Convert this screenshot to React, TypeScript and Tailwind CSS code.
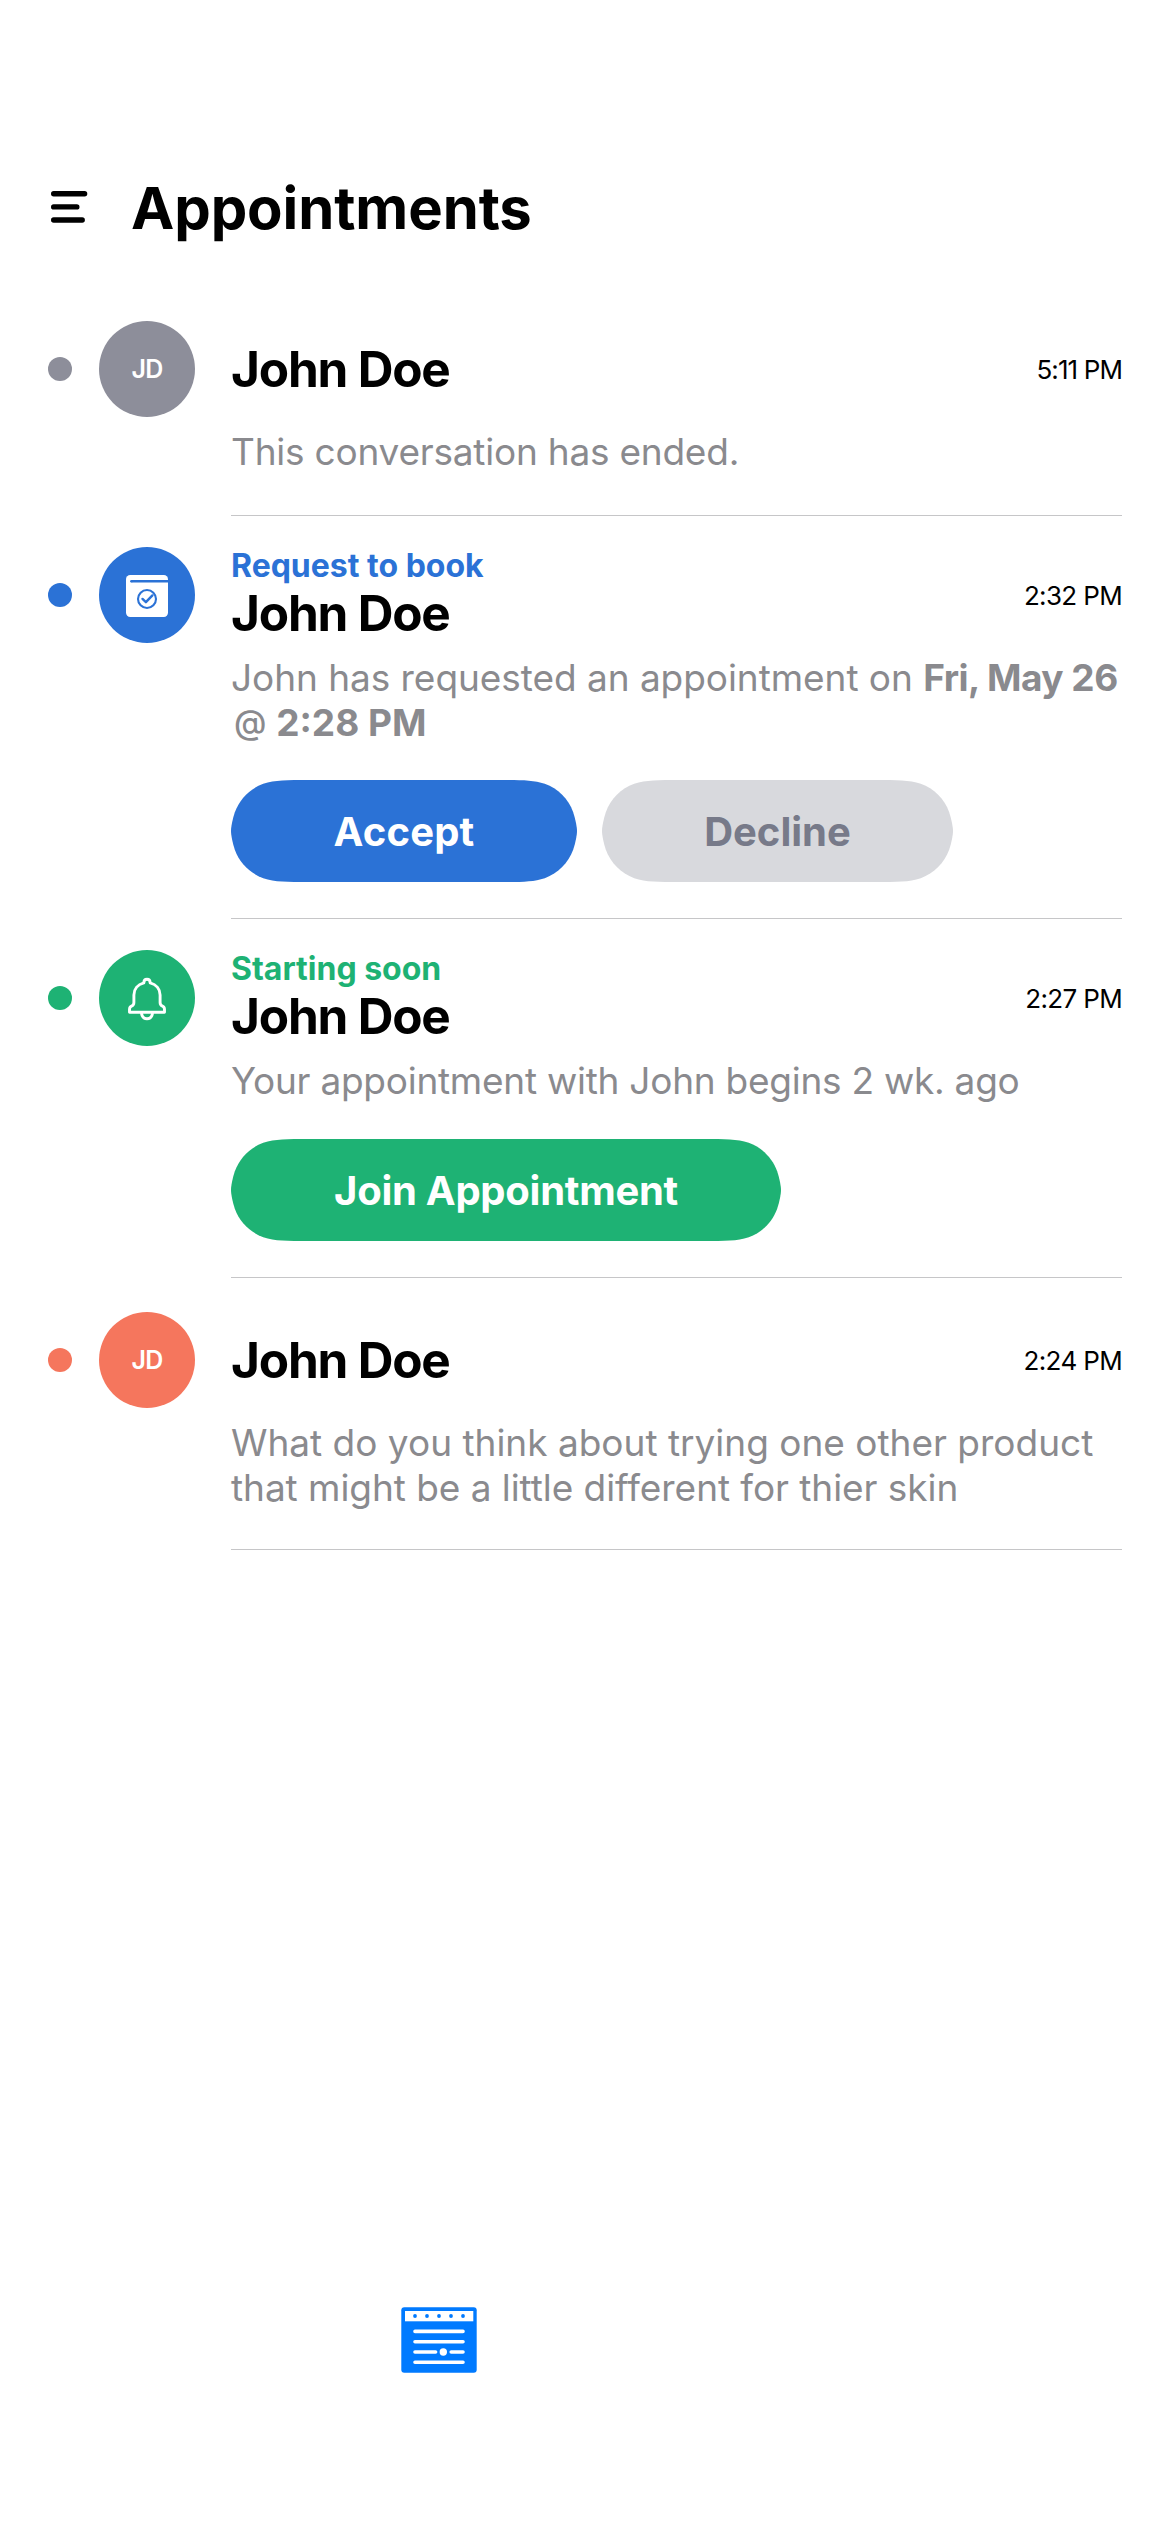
import type { ReactNode } from 'react';

const BUTTON_HEIGHT = 102;

/* Outline of a capsule whose corners have continuous curvature. */
function capsule(w: number): string {
  const h = BUTTON_HEIGHT;
  const r = h / 2;
  const p = (x: number, y: number) => `${(x * r).toFixed(2)} ${(y * r).toFixed(2)}`;
  const W = w / r;
  return [
    `M${p(1.528665, 0)}`,
    `L${p(W - 1.528665, 0)}`,
    `C${p(W - 1.08849, 0)} ${p(W - 0.868407, 0)} ${p(W - 0.631494, 0.0749)}`,
    `C${p(W - 0.372824, 0.16906)} ${p(W - 0.16906, 0.372824)} ${p(W - 0.0749, 0.631494)}`,
    `C${p(W - 0.03, 0.77)} ${p(W, 0.92)} ${p(W, 1)}`,
    `C${p(W, 1.08)} ${p(W - 0.03, 1.23)} ${p(W - 0.0749, 1.368506)}`,
    `C${p(W - 0.16906, 1.627176)} ${p(W - 0.372824, 1.83094)} ${p(W - 0.631494, 1.9251)}`,
    `C${p(W - 0.868407, 2)} ${p(W - 1.08849, 2)} ${p(W - 1.528665, 2)}`,
    `L${p(1.528665, 2)}`,
    `C${p(1.08849, 2)} ${p(0.868407, 2)} ${p(0.631494, 1.9251)}`,
    `C${p(0.372824, 1.83094)} ${p(0.16906, 1.627176)} ${p(0.0749, 1.368506)}`,
    `C${p(0.03, 1.23)} ${p(0, 1.08)} ${p(0, 1)}`,
    `C${p(0, 0.92)} ${p(0.03, 0.77)} ${p(0.0749, 0.631494)}`,
    `C${p(0.16906, 0.372824)} ${p(0.372824, 0.16906)} ${p(0.631494, 0.0749)}`,
    `C${p(0.868407, 0)} ${p(1.08849, 0)} ${p(1.528665, 0)}Z`,
  ].join('');
}

function PillButton({ width, className, children }: { width: number; className: string; children: ReactNode }) {
  return (
    <button
      type="button"
      className={`flex h-[102px] items-center justify-center whitespace-nowrap pt-0.5 text-[40px] font-bold leading-none ${className}`}
      style={{ width, clipPath: `path("${capsule(width)}")` }}
    >
      {children}
    </button>
  );
}

function MenuIcon() {
  return (
    <svg className="mb-0.5" width="37" height="32" viewBox="0 0 37 32" fill="none" stroke="#000" strokeWidth="5.4" strokeLinecap="round">
      <path d="M2.7 2.8H33.6M2.7 15.9H25.8M2.7 29H31.2" />
    </svg>
  );
}

function CalendarCheckIcon() {
  return (
    <svg width="42" height="42" viewBox="0 0 42 42" fill="none">
      <rect width="42" height="42" rx="4.2" fill="#fff" />
      <path d="M5.4 6.2H42" stroke="#2b72d6" strokeWidth="2.6" />
      <circle cx="5.4" cy="6.2" r="1.3" fill="#2b72d6" />
      <circle cx="21" cy="24" r="9" stroke="#2b72d6" strokeWidth="2.1" />
      <path d="M16.5 23.9L19.9 27.2L26.4 20.4" stroke="#2b72d6" strokeWidth="2.4" strokeLinejoin="round" strokeLinecap="round" />
    </svg>
  );
}

function BellIcon() {
  return (
    <svg width="38" height="44" viewBox="0 0 38 44" fill="none" stroke="#fff" strokeWidth="2.9" strokeLinejoin="round">
      <path d="M19 2.2C17 2.2 15.8 3.6 15.8 5.9C9.6 7.6 5.9 12.4 5.9 18V25.5C5.9 27.6 5 28.6 3.5 29.2C2 29.8 1.5 30.7 1.5 32.4V35.3H36.5V32.4C36.5 30.7 36 29.8 34.5 29.2C33 28.6 32.1 27.6 32.1 25.5V18C32.1 12.4 28.4 7.6 22.2 5.9C22.2 3.6 21 2.2 19 2.2Z" />
      <path d="M13.4 36C14 39.8 16 41.8 19 41.8C22 41.8 24 39.8 24.6 36" />
    </svg>
  );
}

function ScheduleTabIcon() {
  return (
    <svg width="76" height="66" viewBox="0 0 76 66">
      <rect x="0.3" y="0.3" width="75.4" height="65.4" rx="3" fill="#007aff" />
      <rect x="4" y="4" width="68.3" height="10.3" fill="#fff" />
      <g fill="#007aff">
        <circle cx="14" cy="9" r="1.9" />
        <circle cx="26" cy="9" r="1.9" />
        <circle cx="38" cy="9" r="1.9" />
        <circle cx="50" cy="9" r="1.9" />
        <circle cx="62" cy="9" r="1.9" />
      </g>
      <path d="M14 24.4H62M14 34.7H62M14 45H34.6M50.2 45H62M14 55.2H62" stroke="#fff" strokeWidth="3.6" strokeLinecap="round" />
      <circle cx="42.3" cy="45" r="3.7" fill="#fff" />
    </svg>
  );
}

interface RowProps {
  tone: string;
  avatar: ReactNode;
  label?: ReactNode;
  time: string;
  timeClass?: string;
  className: string;
  children: ReactNode;
}

function Row({ tone, avatar, label, time, timeClass = 'tracking-[-0.65px]', className, children }: RowProps) {
  return (
    <li className="flex pl-12">
      <div className={`flex shrink-0 ${className}`}>
        <div className="flex h-24 items-center gap-[27px]">
          <span className={`size-6 rounded-full ${tone}`} />
          <span className={`flex size-24 items-center justify-center rounded-full pt-px text-[25px] font-semibold tracking-[-0.8px] text-white ${tone}`}>
            {avatar}
          </span>
        </div>
      </div>
      <div className={`ml-9 mr-12 flex-1 border-b border-[#c6c6c8] ${className}`}>
        <div className="flex h-24 items-center justify-between">
          <div>
            {label}
            <h2 className="text-[49.5px] font-bold leading-[59px] tracking-[-1.2px]">John Doe</h2>
          </div>
          <time className={`pt-px text-[26px] leading-none ${timeClass}`}>{time}</time>
        </div>
        <div className="mt-3 whitespace-nowrap text-[37px] leading-[45px] text-[#8a8a8e]">{children}</div>
      </div>
    </li>
  );
}

export default function App() {
  return (
    <div className="flex h-[2532px] w-[1170px] flex-col overflow-hidden bg-white font-[Inter,sans-serif] text-black">
      <header className="mt-[172px] flex h-[72px] shrink-0 items-center pl-[51px]">
        <MenuIcon />
        <h1 className="ml-[43px] text-[58px] font-bold leading-none tracking-[-0.1px]">Appointments</h1>
      </header>

      <ul className="mt-[43px] flex flex-1 flex-col">
        <Row tone="bg-[#8d8e9a]" avatar="JD" time="5:11 PM" timeClass="tracking-[-0.9px]" className="pt-[34px] pb-[41px]">
          <p className="tracking-[-0.22px]">This conversation has ended.</p>
        </Row>

        <Row
          tone="bg-[#2b72d6]"
          avatar={<CalendarCheckIcon />}
          label={<p className="text-[32px] font-bold leading-9 text-[#2b72d6]">Request to book</p>}
          time="2:32 PM"
          className="pt-[31px] pb-9"
        >
          <p>
            <span className="tracking-[-0.05px]">John has requested an appointment on </span>
            <b className="tracking-[-0.5px]">Fri, May 26</b>
            <br />
            <span className="ml-[3px] inline-block -translate-y-0.5 text-[33px] font-medium leading-none">@</span>
            <b className="ml-px"> 2:28 PM</b>
          </p>
          <div className="mt-[35px] flex gap-[25px]">
            <PillButton width={346} className="bg-[#2b72d6] tracking-[0.2px] text-white">Accept</PillButton>
            <PillButton width={351} className="bg-[#d8d9dd] text-[#777a89]">Decline</PillButton>
          </div>
        </Row>

        <Row
          tone="bg-[#1eb274]"
          avatar={<BellIcon />}
          label={<p className="text-[32px] font-bold leading-9 text-[#1eb274]">Starting soon</p>}
          time="2:27 PM"
          className="pt-[31px] pb-9"
        >
          <p className="tracking-[-0.25px]">Your appointment with John begins 2 wk. ago</p>
          <div className="mt-9 flex">
            <PillButton width={550} className="bg-[#1eb274] tracking-[-0.27px] text-white">Join Appointment</PillButton>
          </div>
        </Row>

        <Row tone="bg-[#f5765d]" avatar="JD" time="2:24 PM" className="pt-[34px] pb-[39px]">
          <p>What do you think about trying one other product</p>
          <p className="tracking-[-0.05px]">that might be a little different for thier skin</p>
        </Row>
      </ul>

      <nav className="shrink-0 pb-[159px] pl-[401px]">
        <ScheduleTabIcon />
      </nav>
    </div>
  );
}
